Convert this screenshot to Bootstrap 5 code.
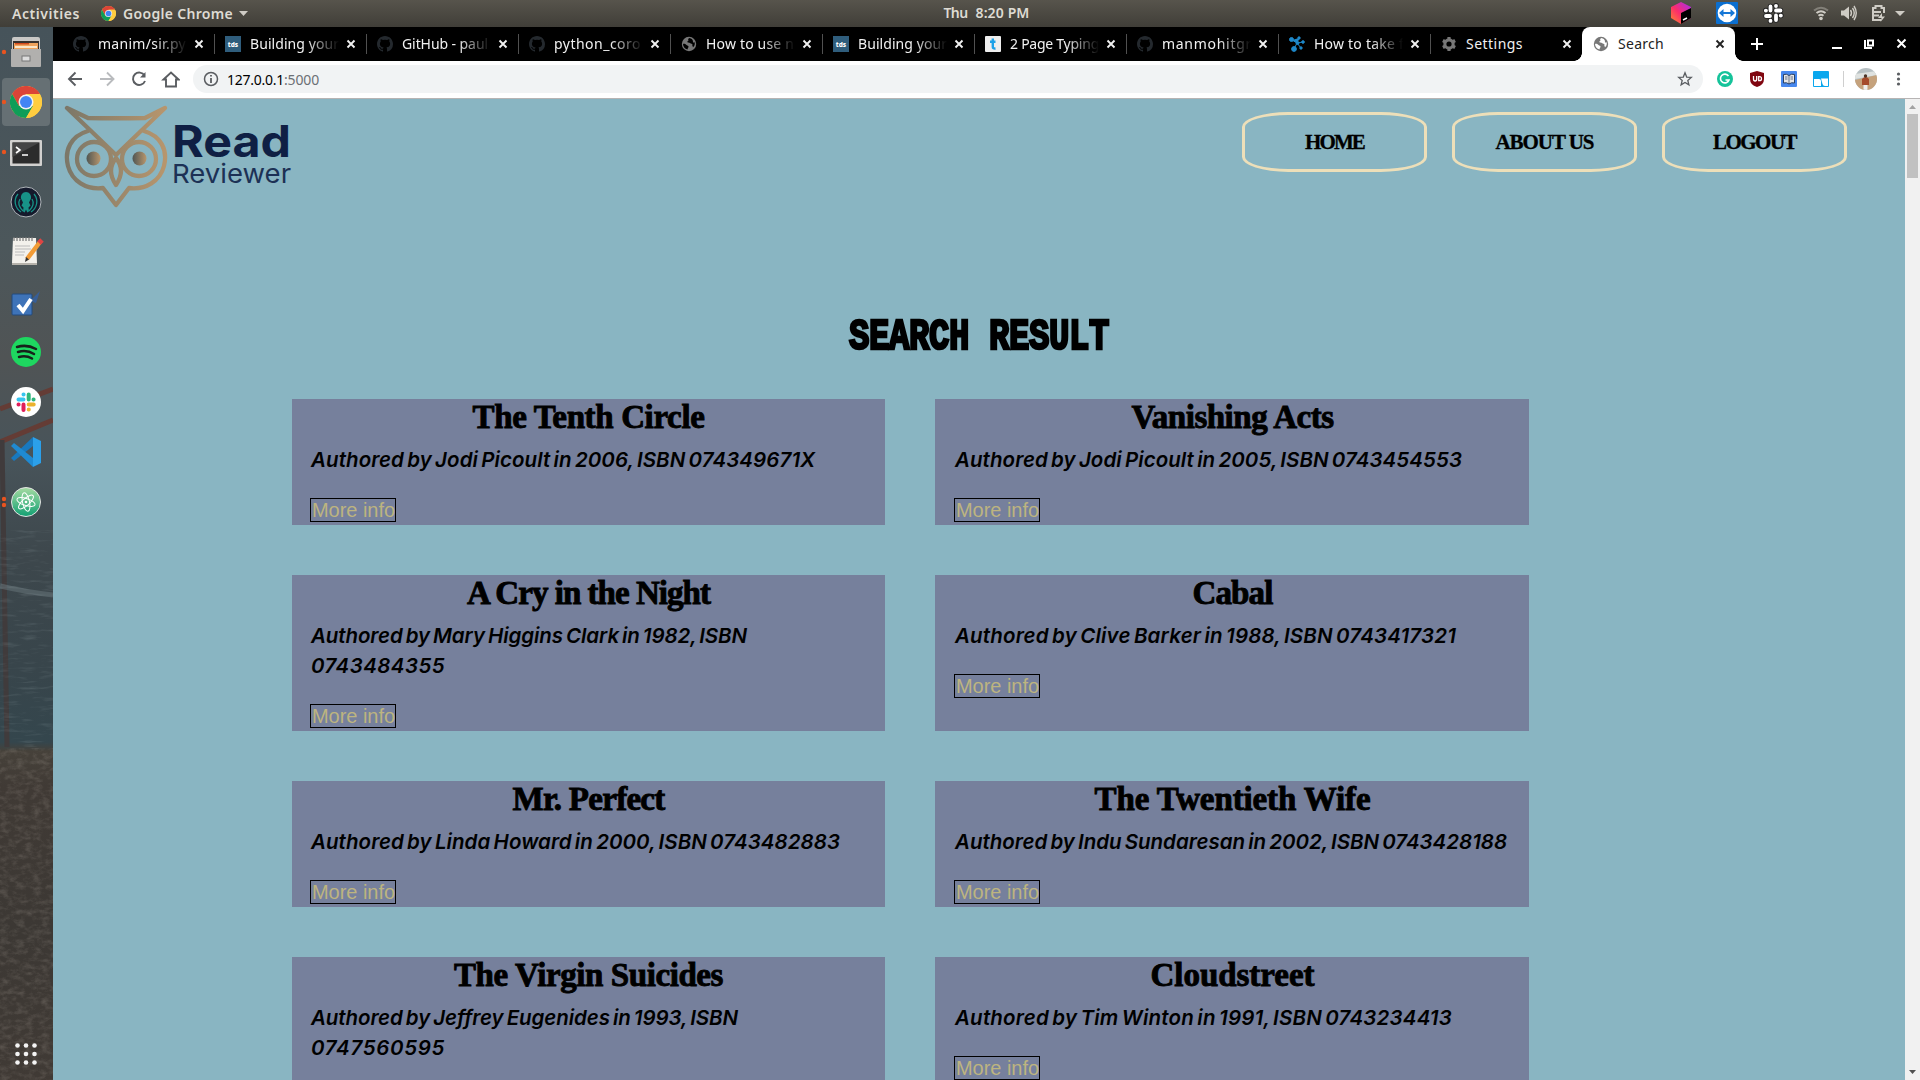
<!DOCTYPE html>
<html lang="en">
<head>
<meta charset="utf-8">
<title>Search</title>
<link href="https://cdn.jsdelivr.net/npm/bootstrap@5.3.0/dist/css/bootstrap.min.css" rel="stylesheet">
<style>
body{width:1920px;height:1080px;overflow:hidden;background:#000;font-family:"Noto Sans","Open Sans",sans-serif;color:#000}
svg{display:block;flex:none}
[data-fit]{display:inline-block;white-space:nowrap}
.topbar{height:27px;background:linear-gradient(#57544c,#403e38);color:#dedbd3;font:600 14px/26px "Noto Sans",sans-serif;padding-left:12px}
.topbar-side{flex:1 1 0}
.clock{padding-left:41px}
.dock{width:53px;background:linear-gradient(#46535a 0,#4c575b 220px,#505455 330px,#48545a 430px,#3d474c 530px,#38454b 640px,#34464d 715px,#46413a 724px,#403a35 760px,#3c3834 900px,#403a35 1053px);position:relative}
.dock-art{position:absolute;left:0;top:0}
.dock-cell{width:53px;height:50px;position:relative}
.dock-cell.current::before{content:"";position:absolute;left:2px;top:1px;width:48px;height:48px;border-radius:4px;background:#667074}
.dock-cell svg{position:relative}
.tabstrip{height:34px;background:#000;padding-left:9px}
.tab{width:152px;height:34px;padding:0 10px 0 11px;position:relative;color:#f1f1f1;font-size:14px}
.tab+.tab:not(.on)::before{content:"";position:absolute;left:0;top:7px;width:1px;height:20px;background:#515151}
.tab-name{width:91px;margin-left:9px;overflow:hidden;white-space:nowrap;line-height:31px;height:33px}
.tab-name.cut{-webkit-mask-image:linear-gradient(90deg,#000 62%,transparent 98%);mask-image:linear-gradient(90deg,#000 62%,transparent 98%)}
.tab.on{width:153px;background:#fff;color:#222;border-radius:8px 8px 0 0;z-index:1}
.tab.on::before,.tab.on::after{content:"";position:absolute;bottom:0;width:8px;height:8px}
.tab.on::before{left:-8px;background:radial-gradient(circle at 0 0,transparent 7.5px,#fff 8px)}
.tab.on::after{right:-8px;background:radial-gradient(circle at 100% 0,transparent 7.5px,#fff 8px)}
.toolbar{box-sizing:border-box;height:38px;background:#fff;border-bottom:1px solid #b7b4b4;padding:0 12px 1px 14px}
.omni{height:28px;border-radius:14px;background:#f1f3f4;font-size:14px;padding:0 10px;width:1510px;margin-left:13px}
.page{background:#89b5c2;height:981px;overflow:hidden}
.scroller{width:15px;height:981px;background:#f1f1f1}
.thumb{width:11px;height:64px;background:#c1c1c1}
.masthead{height:190px;padding:6px 58px 0 11px}
.menu{gap:25px;padding-top:7px}
.menu a{width:185px;height:60px;border:3px solid #eddfb9;border-radius:25%;color:#000;text-decoration:none;font:bold 21px/54px "Liberation Serif",serif;text-align:center;-webkit-text-stroke:.3px #000}
.heading{height:110px;margin:0;font:bold 34px/40px "Liberation Mono",monospace;text-align:center;padding-top:28px}
.heading span{transform:scaleY(1.3);-webkit-text-stroke:2px #000}
.books{display:grid;grid-template-columns:593px 594px;gap:50px;margin-left:239px}
.book{background:#76809c;padding:0 19px 3px}
.book:nth-child(even){padding-left:20px}
.book h2{font:bold 33px/36px "Liberation Serif",serif;margin:0 0 8px;text-align:center;-webkit-text-stroke:.9px #000;height:38px}
.book p{font:italic 600 20.5px/30px Inter,"Liberation Sans",sans-serif;word-spacing:-2px;margin:0 0 23px;height:30px}
.book p.tall{height:60px}
.book p span{vertical-align:top}
.more{display:block;width:86px;height:24px;margin-left:-1px;border:1px solid #000;font:20px/22px "Liberation Sans",sans-serif;color:#bdb480;text-decoration:none;white-space:nowrap;padding-left:1px}
</style>
<script src="https://cdn.jsdelivr.net/npm/bootstrap@5.3.0/dist/js/bootstrap.bundle.min.js"></script>
</head>
<body>
<svg width="0" height="0" class="position-absolute">
<defs>
<symbol id="gh" viewBox="0 0 16 16"><path fill="#24292e" d="M8 0C3.58 0 0 3.58 0 8c0 3.54 2.29 6.53 5.47 7.59.4.07.55-.17.55-.38v-1.5c-2 .37-2.53-.5-2.7-.95-.09-.23-.48-.94-.82-1.13-.28-.15-.68-.52 0-.53.63 0 1.08.58 1.23.82.72 1.21 1.87.87 2.33.66.07-.52.28-.87.5-1.07C4.78 11.31 2.92 10.62 2.92 7.56c0-.87.31-1.59.82-2.15-.08-.2-.36-1.02.08-2.12 0 0 .67-.21 2.2.82a7.4 7.4 0 0 1 4 0c1.53-1.04 2.2-.82 2.2-.82.44 1.1.16 1.92.08 2.12.51.56.82 1.27.82 2.15 0 3.07-1.87 3.75-3.65 3.95.29.25.54.73.54 1.48v2.2c0 .21.15.46.55.38A8 8 0 0 0 16 8c0-4.42-3.58-8-8-8z"/></symbol>
<symbol id="x" viewBox="0 0 10 10"><path d="M1.5 1.5l7 7m0-7l-7 7" stroke="currentColor" stroke-width="1.9" fill="none"/></symbol>
<symbol id="globe" viewBox="0 0 16 16"><circle cx="8" cy="8" r="7.2" fill="#777"/><path fill="var(--land,#fff)" d="M2 8c1-.6 2.500 0 3.500 1s2 .5 2 1.700-1 1.300-1 2.800C3.800 13 2 10.500 2 8zM8.500 2c-1.500.7-1.800 1.800-.8 2.300-1.500 1-2 2-.5 2.200 1.800 0 2 1.200 3.300 1.200.8 0 1.200.8.8 1.800l.7 1.800C13.500 10 14.300 8 13.500 6c-.8 1-2 .4-1.500-.8C11.700 3.500 10.300 2.300 8.500 2z"/></symbol>
<symbol id="tds" viewBox="0 0 16 16"><path fill="#2f5d7c" d="M0 0h16v16H0z"/><text x="8" y="10.600" text-anchor="middle" font-family="Noto Sans" font-weight="800" font-size="6.500" fill="#fff">tds</text></symbol>
<symbol id="gear" viewBox="0 0 16 16"><circle cx="8" cy="8" r="4.100" fill="none" stroke="#777" stroke-width="3.200"/><path d="M8 1v14M1.900 4.500l12.200 7M1.900 11.500l12.200-7" stroke="#777" stroke-width="3.200"/><circle cx="8" cy="8" r="2.600" fill="#000"/></symbol>
<symbol id="chrome" viewBox="0 0 32 32"><circle cx="16" cy="16" r="16" fill="#fc4"/><path fill="#db4437" d="M16 8h13.900A16 16 0 0 0 2.140 8L9 20z"/><path fill="#0f9d58" d="M2.140 8A16 16 0 0 0 16 32l7-12H9z"/><path fill="#ffcd40" d="M16 8h13.900A16 16 0 0 1 16 32l7-12z"/><circle cx="16" cy="16" r="7.500" fill="#f1f1f1"/><circle cx="16" cy="16" r="6" fill="#4285f4"/></symbol>
</defs></svg>

<div class="topbar d-flex">
 <div class="topbar-side d-flex align-items-center">
  <span data-fit="68">Activities</span>
  <svg width="15" height="15" style="margin-left:21px"><use href="#chrome"/></svg>
  <span style="margin-left:7px" data-fit="110">Google Chrome</span>
  <svg style="margin-left:6px" width="9" height="5"><path d="M0 0h9L4.500 5z" fill="#cfccc5"/></svg>
 </div>
 <div class="clock"><span data-fit="24">Thu</span><span class="ms-2" data-fit="54">8:20 PM</span></div>
 <div class="topbar-side d-flex justify-content-end align-items-center">
  <svg width="249" height="27" viewBox="1671 0 249 27">
   <defs><linearGradient id="jb" x2="1" y1="1" y2="0"><stop stop-color="#ff8a2c"/><stop offset=".45" stop-color="#fb2d6b"/><stop offset="1" stop-color="#a52bf5"/></linearGradient></defs>
   <path fill="url(#jb)" d="M1681 2l10 5v11l-10 6-10-6V7z"/><path d="M1681 13l10-5v10l-10 6z"/><path d="M1683 20l4-2" stroke="#fff" stroke-width="1.500"/>
   <rect x="1716" y="2" width="22" height="22" rx="1" fill="#0b6fd0"/><circle cx="1727" cy="13" r="9.300" fill="#fff"/><path fill="#1577d6" d="M1719 13l4.500-4v3h7V9l4.500 4-4.500 4v-3h-7v3z"/>
   <g id="sl" stroke="#222" stroke-width="5.500" stroke-linecap="round"><path d="M1770.500 6.500v4M1776 15.500v4.500M1766 16h4M1776 10.500h4.500M1776 5.800v.2M1765.800 10.600h.2M1770.500 20.700v.2M1780.700 15.600h.2"/></g>
   <g stroke="#fff" stroke-width="3.800" stroke-linecap="round"><path d="M1770.500 6.500v4M1776 15.500v4.500M1766 16h4M1776 10.500h4.500M1776 5.800v.2M1765.800 10.600h.2M1770.500 20.700v.2M1780.700 15.600h.2"/></g>
   <g fill="none" stroke="#cfccc5" stroke-width="2"><path d="M1814 10.500q7-5.500 14 0" opacity=".4"/><path d="M1816.500 13q4.500-3.600 9 0"/><path d="M1818.500 15.700q2.500-2 5 0"/></g><circle cx="1821" cy="18.500" r="1.800" fill="#cfccc5"/>
   <path fill="#cfccc5" d="M1841 10.500h3l5-4v13l-5-4h-3z"/><path d="M1850.500 10q2 3 0 6M1852.500 8q3.500 5 0 10M1854 6q4.500 7 0 14" fill="none" stroke="#cfccc5" stroke-width="1.400"/>
   <path d="M1881 20h-8V8h2.500V6h6v2h2.500v5M1874 12h7M1874 15.500h5" fill="none" stroke="#cfccc5" stroke-width="2"/><path fill="#cfccc5" d="M1882 13l-4 5h3.500l-1 4 4.500-5.500h-3z"/>
   <path d="M1895 11h10l-5 5z" fill="#cfccc5"/>
  </svg>
 </div>
</div>

<div class="d-flex">
<nav class="dock">
 <svg class="dock-art" width="53" height="1053" viewBox="0 27 53 1053">
  <defs><filter id="rock" x="0" y="0" width="1" height="1"><feTurbulence type="fractalNoise" baseFrequency=".12 .2" numOctaves="4" seed="4"/><feColorMatrix values="0 0 0 0 .48 0 0 0 0 .43 0 0 0 0 .38 1.800 0 0 0 -.75"/></filter><filter id="sea" x="0" y="0" width="1" height="1"><feTurbulence type="fractalNoise" baseFrequency=".05 .3" numOctaves="3" seed="9"/><feColorMatrix values="0 0 0 0 .5 0 0 0 0 .6 0 0 0 0 .62 1.800 0 0 0 -.95"/></filter></defs>
  <path d="M0 409L53 389M0 442L53 420" stroke="#643c35" stroke-width="5"/><path d="M2 440L7 747" stroke="#403b3c" stroke-width="5"/>
  <path d="M0 586q25 6 53 9" stroke="#627075" stroke-width="5" fill="none" opacity=".6"/>
  <rect y="530" width="53" height="217" filter="url(#sea)" opacity=".2"/><rect y="748" width="53" height="332" filter="url(#rock)" opacity=".25"/>
 </svg>
 <div class="dock-cell"><svg width="53" height="50"><circle cx="4" cy="25" r="2.200" fill="#e95420"/><rect x="12" y="10" width="28" height="30" rx="2" fill="#c9c8c6"/><path d="M13 14h26v9H13z" fill="#38322e"/><path d="M14 16h24v6H14z" fill="#f0a35c"/><path d="M15 16h14v1.500H15z" fill="#d24a1c"/><path d="M15 19h22v2H15z" fill="#fbe6c8"/><path d="M11 22h30v17q0 1-1 1H12q-1 0-1-1z" fill="#b1b0ae"/><rect x="22" y="29" width="8" height="5" fill="#ddd" stroke="#777"/></svg></div>
 <div class="dock-cell current"><svg width="53" height="50"><circle cx="4" cy="25" r="2.200" fill="#e95420"/><use href="#chrome" x="10" y="9" width="32" height="32"/></svg></div>
 <div class="dock-cell"><svg width="53" height="50"><circle cx="4" cy="25" r="2.200" fill="#e95420"/><rect x="10" y="13" width="32" height="26" rx="1" fill="#d2d1cf"/><rect x="12.500" y="15.500" width="27" height="21" fill="#2c2c2c"/><path d="M12.500 15.500h27L12.500 30z" fill="#454545"/><path d="M16 20l4 3-4 3M22 28h6" fill="none" stroke="#fff" stroke-width="1.600"/></svg></div>
 <div class="dock-cell"><svg width="53" height="50"><circle cx="26" cy="25" r="15" fill="#151a2c" stroke="#aeb4b8"/><path fill="#179287" d="M26 15c3.500 0 5.500 3 5 6.500l-2 4 1.500 3-2 2 .5 4-1.700 1-1.300-3-1.300 3-1.700-1 .5-4-2-2 1.500-3-2-4c-.5-3.500 1.500-6.500 5-6.500z"/><path fill="none" stroke="#179287" stroke-width="1.300" d="M18 17c-5 6-3 14 3 18M34 17c5 6 3 14-3 18M20 22c-3 5 0 9 3 12M32 22c3 5 0 9-3 12"/></svg></div>
 <div class="dock-cell"><svg width="53" height="50"><g transform="translate(0 -2)"><path fill="#f3f1ec" d="M13 13h23l1 25H12z"/><path d="M12 38h25v2H12z" fill="#b5b2ab"/><path d="M14 12v4M17 12v4M20 12v4M23 12v4M26 12v4M29 12v4M32 12v4" stroke="#777" stroke-width="1.200"/><path d="M15 21h15M15 24h16M15 27h10M15 30h9" stroke="#bbb" stroke-width="1"/><path d="M27 34l13-17" stroke="#f29b35" stroke-width="4.500"/><path d="M39 18l3-3" stroke="#df4444" stroke-width="5"/><path d="M25 37l1-5 3 2.500z" fill="#333"/></g></svg></div>
 <div class="dock-cell"><svg width="53" height="50"><rect x="12" y="17" width="20" height="21" rx="1" fill="#3e73b8" stroke="#234a7c"/><path d="M30 24l10-10-4 12z" fill="#375e96"/><path d="M18 28l5 6 8-12" fill="none" stroke="#fff" stroke-width="4"/></svg></div>
 <div class="dock-cell"><svg width="53" height="50"><circle cx="26" cy="25" r="15" fill="#1ed760"/><path d="M17 20q10-3 19 2M18 25q9-2.500 16 2M19 30q7-2 13 1.500" fill="none" stroke="#17211b" stroke-width="2.500" stroke-linecap="round"/></svg></div>
 <div class="dock-cell"><svg width="53" height="50"><circle cx="26" cy="25" r="15" fill="#fff"/><g stroke-width="4" stroke-linecap="round"><path d="M18.500 22.500h5M23.500 17.500h.1" stroke="#36c5f0"/><path d="M28.700 17.500v5M33.500 22.500h.1" stroke="#2eb67d"/><path d="M28.700 27.500h5M28.700 32.500h.1" stroke="#ecb22e"/><path d="M23.500 27.500v5.500M18.500 27.500h.1" stroke="#e01e5a"/></g></svg></div>
 <div class="dock-cell"><svg width="53" height="50"><path d="M33 10l8 4v22l-8 4z" fill="#2ba0ea"/><path d="M33 10v9L14 34l-3-3z" fill="#1879bf"/><path d="M33 40v-9L14 16l-3 3z" fill="#1f8ad2"/></svg></div>
 <div class="dock-cell"><svg width="53" height="50"><circle cx="4" cy="22" r="2.200" fill="#e95420"/><circle cx="4" cy="28" r="2.200" fill="#e95420"/><defs><linearGradient id="at" x2="0" y2="1"><stop stop-color="#a5dba2"/><stop offset="1" stop-color="#12a173"/></linearGradient></defs><circle cx="26" cy="25" r="14.500" fill="url(#at)" stroke="#e4e4e4"/><g fill="none" stroke="#fff" stroke-width="1"><ellipse cx="26" cy="25" rx="9.500" ry="3.500" transform="rotate(18 26 25)"/><ellipse cx="26" cy="25" rx="9.500" ry="3.500" transform="rotate(78 26 25)"/><ellipse cx="26" cy="25" rx="9.500" ry="3.500" transform="rotate(-42 26 25)"/></g><circle cx="26" cy="25" r="1.300" fill="#fff"/></svg></div>
 <svg class="position-absolute bottom-0" width="53" height="50"><g fill="#f4f4f4" transform="translate(0 -1)"><circle cx="17.500" cy="16.500" r="2.300"/><circle cx="26" cy="16.500" r="2.300"/><circle cx="34.500" cy="16.500" r="2.300"/><circle cx="17.500" cy="25" r="2.300"/><circle cx="26" cy="25" r="2.300"/><circle cx="34.500" cy="25" r="2.300"/><circle cx="17.500" cy="33.500" r="2.300"/><circle cx="26" cy="33.500" r="2.300"/><circle cx="34.500" cy="33.500" r="2.300"/></g></svg>
</nav>

<div class="flex-grow-1">
 <div class="tabstrip d-flex">
  <div class="tab d-flex align-items-center"><svg width="16" height="16"><use href="#gh"/></svg><div class="tab-name cut"><span data-fit="88">manim/sir.py</span></div><svg width="10" height="10" class="ms-auto"><use href="#x"/></svg></div>
  <div class="tab d-flex align-items-center"><svg width="16" height="16"><use href="#tds"/></svg><div class="tab-name cut"><span data-fit="89">Building your</span></div><svg width="10" height="10" class="ms-auto"><use href="#x"/></svg></div>
  <div class="tab d-flex align-items-center"><svg width="16" height="16"><use href="#gh"/></svg><div class="tab-name cut"><span data-fit="86">GitHub - paul</span></div><svg width="10" height="10" class="ms-auto"><use href="#x"/></svg></div>
  <div class="tab d-flex align-items-center"><svg width="16" height="16"><use href="#gh"/></svg><div class="tab-name cut"><span data-fit="87">python_coro</span></div><svg width="10" height="10" class="ms-auto"><use href="#x"/></svg></div>
  <div class="tab d-flex align-items-center" style="--land:#000"><svg width="16" height="16"><use href="#globe"/></svg><div class="tab-name cut"><span data-fit="88">How to use n</span></div><svg width="10" height="10" class="ms-auto"><use href="#x"/></svg></div>
  <div class="tab d-flex align-items-center"><svg width="16" height="16"><use href="#tds"/></svg><div class="tab-name cut"><span data-fit="89">Building your</span></div><svg width="10" height="10" class="ms-auto"><use href="#x"/></svg></div>
  <div class="tab d-flex align-items-center"><svg width="16" height="16"><rect width="16" height="16" rx="1" fill="#eee"/><path d="M7.800 2.500v8.500q0 1.800 2.700 1.500M5 5.800h5.500" fill="none" stroke="#1da1e8" stroke-width="2.400"/></svg><div class="tab-name cut"><span data-fit="89">2 Page Typing</span></div><svg width="10" height="10" class="ms-auto"><use href="#x"/></svg></div>
  <div class="tab d-flex align-items-center"><svg width="16" height="16"><use href="#gh"/></svg><div class="tab-name cut"><span data-fit="90">manmohitgr</span></div><svg width="10" height="10" class="ms-auto"><use href="#x"/></svg></div>
  <div class="tab d-flex align-items-center"><svg width="16" height="16"><g fill="#1e88c9" stroke="#1e88c9"><path d="M3 4l5 3 2-5M8 7l6-1M8 7l-3 6M8 7l4 5"/><circle cx="2.500" cy="3.500" r="2"/><circle cx="10" cy="2" r="1.200"/><circle cx="14" cy="6" r="1.300"/><circle cx="8.500" cy="7" r="1.500"/><circle cx="5" cy="13" r="2.400"/><circle cx="12" cy="12" r="1.200"/></g></svg><div class="tab-name cut"><span data-fit="90">How to take f</span></div><svg width="10" height="10" class="ms-auto"><use href="#x"/></svg></div>
  <div class="tab d-flex align-items-center"><svg width="16" height="16"><use href="#gear"/></svg><div class="tab-name"><span data-fit="57">Settings</span></div><svg width="10" height="10" class="ms-auto"><use href="#x"/></svg></div>
  <div class="tab on d-flex align-items-center"><svg width="16" height="16"><use href="#globe"/></svg><div class="tab-name"><span data-fit="46">Search</span></div><svg width="10" height="10" class="ms-auto"><use href="#x"/></svg></div>
  <svg width="185" height="34" viewBox="1735 27 185 34" fill="none" stroke="#fff" stroke-width="2"><path d="M1751 44h12M1757 38v12M1832 48h10"/><path d="M1868 40.500h5v5h-5zM1865 40v8h7" /><path d="M1897.500 39.500l8 8m0-8l-8 8"/></svg>
 </div>
 <div class="toolbar d-flex align-items-center">
  <svg width="113" height="28" viewBox="67 65 113 28" fill="none" stroke="#5a5d61" stroke-width="1.900"><path d="M82 79H69M75.500 72.500L69 79l6.500 6.500"/><path d="M100 79h13M107 72.500l6.500 6.500-6.500 6.500" stroke="#b9bbbe"/><path d="M144.500 75.500a6.200 6.200 0 1 0 .5 5.500"/><path d="M145.500 72v5.500H140z" fill="#5a5d61" stroke="none"/><path d="M163.500 79.500l7.500-7 7.500 7H176v7h-10v-7z"/></svg>
  <div class="omni d-flex align-items-center">
   <svg width="16" height="16" fill="none" stroke="#5a5d61" stroke-width="1.500"><circle cx="8" cy="8" r="6.500"/><path d="M8 7v5M8 4v1.600" stroke-width="1.800"/></svg>
   <span style="margin-left:8px" data-fit="57">127.0.0.1</span><span style="color:#6c7075" data-fit="35">:5000</span>
   <svg class="ms-auto" width="16" height="16"><path d="M8 1.800l1.700 4.300 4.600.3-3.500 3 1.100 4.500L8 11.400l-3.900 2.500 1.100-4.500-3.500-3 4.600-.3z" fill="none" stroke="#5a5d61" stroke-width="1.300"/></svg>
  </div>
  <svg width="202" height="36" viewBox="1703 61 202 36"><circle cx="1725" cy="79" r="8" fill="#15c39a"/><path d="M1728.500 76a4.400 4.400 0 1 0 .5 4h-3.500" fill="none" stroke="#fff" stroke-width="1.600"/>
   <path d="M1757 71l7 2v6q0 6-7 8-7-2-7-8v-6z" fill="#800610"/><path d="M1753.500 76v3q0 2 1.600 2t1.600-2v-3M1758.700 76.700v4h.8q2 0 2-2t-2-2z" fill="none" stroke="#fff" stroke-width="1.300"/>
   <rect x="1781" y="71" width="16" height="16" rx="1" fill="#4788ee"/><path d="M1783.500 74.500q3-1 5.500 1 2.500-2 5.500-1v8.500q-3-1-5.500 1-2.500-2-5.500-1z" fill="#e7e7e7" stroke="#2b4163"/><path d="M1789 75.500V84M1785 77h2.500M1785 79h2.500M1790.500 77h2.500M1790.500 79h2.500" stroke="#2b4163" stroke-width=".7"/>
   <rect x="1813" y="71" width="16" height="16" rx="1" fill="#0aa7ee"/><path d="M1814 79h5q2 0 2 2v5h-7zM1821 78.500h7V86h-3q-2 0-2.500-2z" fill="#fff"/>
   <path d="M1843.500 71v16" stroke="#cfcfcf"/><clipPath id="av"><circle cx="1866" cy="79" r="11"/></clipPath><g clip-path="url(#av)"><path fill="#b7c0c3" d="M1855 68h22v22h-22z"/><path fill="#dfe2e0" d="M1855 74l22-3v4l-22 4z"/><path fill="#c5a27c" d="M1855 80l22-5v15h-22z"/><path fill="#a54a2b" d="M1862 79q3.500-4 7 0v6h-7z"/><circle cx="1865.500" cy="76" r="1.700" fill="#4b3427"/><path fill="#eee" d="M1863.500 85h4v5h-4z"/></g>
   <g fill="#5a5d61"><circle cx="1898.500" cy="74" r="1.600"/><circle cx="1898.500" cy="79" r="1.600"/><circle cx="1898.500" cy="84" r="1.600"/></g></svg>
 </div>
 <div class="d-flex">
 <main class="page flex-grow-1">
  <header class="masthead d-flex justify-content-between align-items-start">
   <svg width="240" height="106" viewBox="64 105 240 106">
    <defs><linearGradient id="owl" gradientUnits="userSpaceOnUse" x1="65" x2="167" y1="0" y2="0"><stop stop-color="#7b7768"/><stop offset="1" stop-color="#b8966d"/></linearGradient><linearGradient id="eye"><stop stop-color="#505653"/><stop offset="1" stop-color="#b8966d"/></linearGradient></defs>
    <g fill="none" stroke="url(#owl)" stroke-width="4.300" stroke-linejoin="round" stroke-linecap="round"><path d="M67 108l21 10q28 .5 57 0l20-10-23 22-26 25-26-25z"/><path d="M88 131C71 136 64 150 68 166c4 15 18 24 35 22l13 17 13-17c17 2 31-7 35-22 4-16-3-30-20-35"/><circle cx="94" cy="159" r="17"/><circle cx="139" cy="159" r="17"/><path d="M116 158q-10 12 0 27 10-15 0-27z"/></g>
    <circle cx="93.500" cy="158.500" r="7" fill="url(#eye)"/><circle cx="139.500" cy="158.500" r="7" fill="url(#eye)"/>
    <text x="172" y="157" textLength="119" lengthAdjust="spacingAndGlyphs" font-family="Inter,sans-serif" font-weight="700" font-size="44" fill="#0f1f44">Read</text>
    <text x="172" y="183" textLength="119" lengthAdjust="spacingAndGlyphs" font-family="Inter,sans-serif" font-size="26" fill="#1c3155">Reviewer</text>
   </svg>
   <nav class="menu d-flex"><a href="#"><span data-fit="59">HOME</span></a><a href="#"><span data-fit="98">ABOUT US</span></a><a href="#"><span data-fit="83">LOGOUT</span></a></nav>
  </header>
  <h1 class="heading"><span data-fit="260">SEARCH RESULT</span></h1>
  <section class="books">
   <article class="book"><h2><span data-fit="232">The Tenth Circle</span></h2><p><span data-fit="504">Authored by Jodi Picoult in 2006, ISBN 074349671X</span></p><a class="more" href="#"><span data-fit="83">More info</span></a></article>
   <article class="book"><h2><span data-fit="202">Vanishing Acts</span></h2><p><span data-fit="507">Authored by Jodi Picoult in 2005, ISBN 0743454553</span></p><a class="more" href="#"><span data-fit="83">More info</span></a></article>
   <article class="book"><h2><span data-fit="243">A Cry in the Night</span></h2><p class="tall"><span data-fit="436">Authored by Mary Higgins Clark in 1982, ISBN</span><br><span data-fit="134">0743484355</span></p><a class="more" href="#"><span data-fit="83">More info</span></a></article>
   <article class="book"><h2><span data-fit="80">Cabal</span></h2><p><span data-fit="501">Authored by Clive Barker in 1988, ISBN 0743417321</span></p><a class="more" href="#"><span data-fit="83">More info</span></a></article>
   <article class="book"><h2><span data-fit="152">Mr. Perfect</span></h2><p><span data-fit="529">Authored by Linda Howard in 2000, ISBN 0743482883</span></p><a class="more" href="#"><span data-fit="83">More info</span></a></article>
   <article class="book"><h2><span data-fit="276">The Twentieth Wife</span></h2><p><span data-fit="552">Authored by Indu Sundaresan in 2002, ISBN 0743428188</span></p><a class="more" href="#"><span data-fit="83">More info</span></a></article>
   <article class="book"><h2><span data-fit="269">The Virgin Suicides</span></h2><p class="tall"><span data-fit="427">Authored by Jeffrey Eugenides in 1993, ISBN</span><br><span data-fit="134">0747560595</span></p><a class="more" href="#"><span data-fit="83">More info</span></a></article>
   <article class="book"><h2><span data-fit="164">Cloudstreet</span></h2><p><span data-fit="497">Authored by Tim Winton in 1991, ISBN 0743234413</span></p><a class="more" href="#"><span data-fit="83">More info</span></a></article>
  </section>
 </main>
 <div class="scroller d-flex flex-column align-items-center">
  <svg width="15" height="15"><path d="M4 10h7L7.500 6z" fill="#a3a3a3"/></svg><div class="thumb"></div>
  <svg class="mt-auto" width="15" height="15"><path d="M4 5h7L7.500 9z" fill="#505050"/></svg>
 </div>
 </div>
</div>
</div>
<script>
// Track each label to its design width
document.querySelectorAll('[data-fit]').forEach(function(el){
  var extra=el.dataset.fit-el.getBoundingClientRect().width;
  el.style.letterSpacing=(extra/el.textContent.length)+'px';
});
</script>
</body>
</html>
